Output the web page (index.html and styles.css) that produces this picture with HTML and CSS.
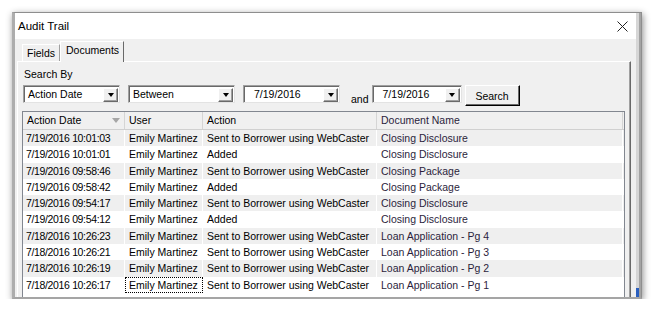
FILE: index.html
```html
<!DOCTYPE html>
<html lang="en">
  <head>
    <meta charset="UTF-8" />
    <title>Audit Trail</title>
    <link rel="stylesheet" href="styles.css">
  </head>
  <body>
    <div class="window">
      <div class="main">
        <div class="titlebar">
          <span>Audit Trail</span>
          <svg class="close" width="11" height="11" viewBox="0 0 11 11">
            <path d="M0.5 0.5 L10.5 10.5 M10.5 0.5 L0.5 10.5" stroke="#222" stroke-width="1" fill="none" />
          </svg>
        </div>

        <div class="body">
          <!-- tab strip -->
          <div class="tabs">
            <div class="tab">Fields</div>
            <div class="tab active">Documents</div>
          </div>

          <div class="panel">
            <div class="search-label">Search By</div>
            <div class="search-row">
              <div class="combo combo-field"><span>Action Date</span><span class="drop"><i></i></span></div>
              <div class="combo combo-op"><span>Between</span><span class="drop"><i></i></span></div>
              <div class="combo combo-date"><span>7/19/2016</span><span class="drop"><i></i></span></div>
              <span class="and">and</span>
              <div class="combo combo-date combo-date2"><span>7/19/2016</span><span class="drop"><i></i></span></div>
              <button class="btn">Search</button>
            </div>

            <div class="list">
              <div class="row head">
                <div class="cell sort">Action Date
                  <svg width="8" height="5" viewBox="0 0 8 5"><path d="M0 0 L8 0 L4 5 Z" fill="#a6a6a6" /></svg>
                </div>
                <div class="cell">User</div>
                <div class="cell">Action</div>
                <div class="cell doc">Document Name</div>
              </div>
              <div class="row alt">
                <div class="cell date">7/19/2016 10:01:03</div>
                <div class="cell">Emily Martinez</div>
                <div class="cell">Sent to Borrower using WebCaster</div>
                <div class="cell doc">Closing Disclosure</div>
              </div>
              <div class="row">
                <div class="cell date">7/19/2016 10:01:01</div>
                <div class="cell">Emily Martinez</div>
                <div class="cell">Added</div>
                <div class="cell doc">Closing Disclosure</div>
              </div>
              <div class="row alt">
                <div class="cell date">7/19/2016 09:58:46</div>
                <div class="cell">Emily Martinez</div>
                <div class="cell">Sent to Borrower using WebCaster</div>
                <div class="cell doc">Closing Package</div>
              </div>
              <div class="row">
                <div class="cell date">7/19/2016 09:58:42</div>
                <div class="cell">Emily Martinez</div>
                <div class="cell">Added</div>
                <div class="cell doc">Closing Package</div>
              </div>
              <div class="row alt">
                <div class="cell date">7/19/2016 09:54:17</div>
                <div class="cell">Emily Martinez</div>
                <div class="cell">Sent to Borrower using WebCaster</div>
                <div class="cell doc">Closing Disclosure</div>
              </div>
              <div class="row">
                <div class="cell date">7/19/2016 09:54:12</div>
                <div class="cell">Emily Martinez</div>
                <div class="cell">Added</div>
                <div class="cell doc">Closing Disclosure</div>
              </div>
              <div class="row alt">
                <div class="cell date">7/18/2016 10:26:23</div>
                <div class="cell">Emily Martinez</div>
                <div class="cell">Sent to Borrower using WebCaster</div>
                <div class="cell doc">Loan Application - Pg 4</div>
              </div>
              <div class="row">
                <div class="cell date">7/18/2016 10:26:21</div>
                <div class="cell">Emily Martinez</div>
                <div class="cell">Sent to Borrower using WebCaster</div>
                <div class="cell doc">Loan Application - Pg 3</div>
              </div>
              <div class="row alt">
                <div class="cell date">7/18/2016 10:26:19</div>
                <div class="cell">Emily Martinez</div>
                <div class="cell">Sent to Borrower using WebCaster</div>
                <div class="cell doc">Loan Application - Pg 2</div>
              </div>
              <div class="row">
                <div class="cell date">7/18/2016 10:26:17</div>
                <div class="cell focus">Emily Martinez</div>
                <div class="cell">Sent to Borrower using WebCaster</div>
                <div class="cell doc">Loan Application - Pg 1</div>
              </div>
            </div>
          </div>
        </div>
      </div>

      <!-- right frame edge -->
      <div class="edge"><span class="edge-mark"></span></div>
    </div>
  </body>
</html>
```

FILE: styles.css
```css
* {
  box-sizing: border-box;
}

body {
  margin: 0;
  background: #fff;
  font-family: "Liberation Sans", Arial, sans-serif;
  font-size: 10.5px;
  color: #000;
}

.window {
  margin: 12px 0 0 12px;
  width: 630px;
  height: 287px;
  display: flex;
  border: 1px solid #8e8e8e;
  border-left: 3px solid #adadad;
  border-bottom: 2px solid #a5a5a5;
  box-shadow: 1px 2px 7px rgba(0, 0, 0, 0.45);
  overflow: hidden;
}

.main {
  width: 621px;
  display: flex;
  flex-direction: column;
}

.titlebar {
  height: 26px;
  flex: none;
  background: #fff;
  display: flex;
  align-items: center;
  justify-content: space-between;
  padding: 0 8px 0 3px;
  font-size: 11.5px;
}

.body {
  flex: 1;
  min-height: 0;
  background: #f0f0f0;
  padding: 2px 0 0 2px;
  display: flex;
  flex-direction: column;
}

.tabs {
  display: flex;
  align-items: flex-end;
  height: 20px;
  flex: none;
  padding-left: 5px;
}

.tab {
  height: 17px;
  width: 38px;
  padding-left: 4px;
  line-height: 16px;
  border: 1px solid;
  border-color: #fff #a0a0a0 transparent #fff;
  border-bottom: none;
}

.tab.active {
  position: relative;
  z-index: 1;
  width: 64px;
  height: 21px;
  margin-bottom: -1px;
  padding-left: 5px;
  line-height: 17px;
  background: #f0f0f0;
  border-color: #fff #696969 transparent #fff;
}

.panel {
  flex: 1;
  min-height: 0;
  width: 614px;
  border-top: 1px solid #fff;
  border-left: 1px solid #fff;
  border-right: 1px solid #696969;
  box-shadow: inset -1px 0 #a0a0a0;
  padding: 6px 0 0 4px;
  display: flex;
  flex-direction: column;
}

.search-label {
  height: 13px;
  line-height: 13px;
  padding-left: 2px;
}

.search-row {
  display: flex;
  align-items: flex-start;
  height: 21px;
  margin-top: 4px;
  padding-left: 1px;
}

.combo {
  height: 18px;
  background: #fff;
  border: 1px solid;
  border-color: #a0a0a0 #e3e3e3 #e3e3e3 #a0a0a0;
  box-shadow: inset 1px 1px #696969;
  display: flex;
  align-items: center;
  justify-content: space-between;
  padding: 0 1px 0 4px;
  margin-right: 8px;
}

.combo-field {
  width: 97px;
}

.combo-op {
  width: 107px;
}

.combo-date {
  width: 97px;
  padding-left: 10px;
  margin-right: 0;
}

.combo-date2 {
  width: 90px;
  margin-right: 3px;
}

.drop {
  width: 15px;
  height: 14px;
  margin-top: 1px;
  background: #f0f0f0;
  border: 1px solid;
  border-color: #fff #696969 #696969 #fff;
  box-shadow: inset -1px -1px #a0a0a0;
  display: flex;
  align-items: center;
  justify-content: center;
}

.drop i {
  width: 0;
  height: 0;
  border-left: 3.5px solid transparent;
  border-right: 3.5px solid transparent;
  border-top: 4px solid #000;
}

.and {
  align-self: flex-end;
  margin: 0 3px 0 11px;
  line-height: 13px;
}

.btn {
  width: 55px;
  height: 21px;
  padding: 0;
  font: inherit;
  color: #000;
  background: #f0f0f0;
  border: 1px solid;
  border-color: #fff #000 #000 #fff;
  box-shadow: inset -1px -1px #696969;
}

.list {
  flex: 1;
  min-height: 0;
  width: 603px;
  margin-top: 5px;
  background: #fff;
  border: 1px solid #828790;
  border-bottom: none;
  overflow: hidden;
}

.row {
  display: grid;
  grid-template-columns: 102px 78px 174px 246px;
  height: 16.3px;
  line-height: 16px;
}

.row.alt {
  background: #efefef;
}

.row.head {
  height: 18px;
  line-height: 17px;
  background: #f0f0f0;
  border-bottom: 1px solid #d0d0d0;
}

.cell {
  padding-left: 4px;
  white-space: nowrap;
  overflow: hidden;
  border-right: 1px solid #fff;
}

.head .cell {
  border-right-color: #d5d5d5;
}

.cell.date {
  padding-left: 3px;
  letter-spacing: -0.35px;
}

.cell.sort {
  display: flex;
  align-items: center;
  justify-content: space-between;
  padding-right: 4px;
}

.cell.doc {
  color: #2b1e3c;
}

.cell.focus {
  border: 1px dotted #000;
  padding-left: 3px;
  line-height: 14px;
}

.edge {
  width: 5px;
  background: #d6d6d6;
  border-right: 2px solid #a3a3a3;
  display: flex;
  flex-direction: column;
  justify-content: flex-end;
}

.edge-mark {
  height: 9px;
  width: 3px;
  background: #2a5fbf;
}
```
